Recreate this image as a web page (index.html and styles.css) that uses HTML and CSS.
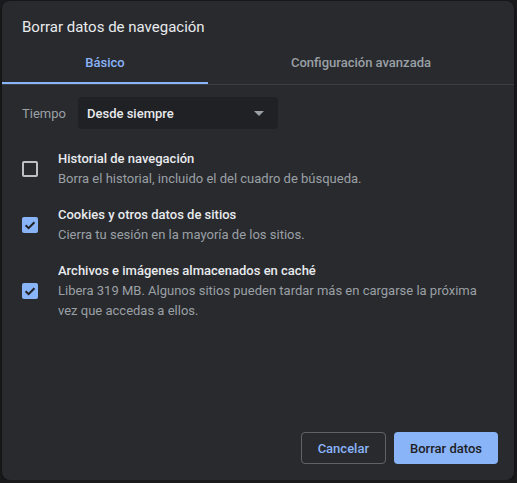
FILE: index.html
```html
<!DOCTYPE html>
<html lang="es">
<head>
    <meta charset="UTF-8">
    <meta name="viewport" content="width=device-width, initial-scale=1.0">
    <title>Borrar datos de navegación</title>
    <link rel="stylesheet" href="styles.css">
</head>
<body>
    <div class="dialog">
        <h1 class="title">Borrar datos de navegación</h1>

        <div class="tabs">
            <div class="tab tab-basic active">Básico</div>
            <div class="tab tab-advanced">Configuración avanzada</div>
        </div>

        <div class="content">
            <div class="time-row">
                <span class="time-label">Tiempo</span>
                <div class="select">
                    <span>Desde siempre</span>
                    <span class="arrow"></span>
                </div>
            </div>

            <div class="item">
                <span class="checkbox"></span>
                <div class="item-text">
                    <div class="item-title">Historial de navegación</div>
                    <div class="item-desc">Borra el historial, incluido el del cuadro de búsqueda.</div>
                </div>
            </div>

            <div class="item">
                <span class="checkbox checked">
                    <svg viewBox="0 0 16 16" width="16" height="16"><path d="M3.6 8.2 L6.6 11.1 L12.4 5.2" fill="none" stroke="#202124" stroke-width="2"/></svg>
                </span>
                <div class="item-text">
                    <div class="item-title">Cookies y otros datos de sitios</div>
                    <div class="item-desc">Cierra tu sesión en la mayoría de los sitios.</div>
                </div>
            </div>

            <div class="item">
                <span class="checkbox checked">
                    <svg viewBox="0 0 16 16" width="16" height="16"><path d="M3.6 8.2 L6.6 11.1 L12.4 5.2" fill="none" stroke="#202124" stroke-width="2"/></svg>
                </span>
                <div class="item-text">
                    <div class="item-title">Archivos e imágenes almacenados en caché</div>
                    <div class="item-desc">Libera 319 MB. Algunos sitios pueden tardar más en cargarse la próxima vez que accedas a ellos.</div>
                </div>
            </div>
        </div>

        <div class="actions">
            <button class="btn btn-cancel">Cancelar</button>
            <button class="btn btn-primary">Borrar datos</button>
        </div>
    </div>
</body>
</html>
```

FILE: styles.css
```css
body {
    margin: 0;
    background-color: #1b1b1d;
    font-family: 'Roboto', 'Liberation Sans', sans-serif;
    font-size: 13px;
    color: #e8eaed;
}
.dialog {
    box-sizing: border-box;
    width: 512px;
    height: 479px;
    margin: 1px 0 0 2px;
    background-color: #292a2d;
    border-radius: 8px;
    display: flex;
    flex-direction: column;
    box-shadow: 0 1px 4px rgba(0, 0, 0, 0.5);
}
.title {
    margin: 0;
    padding: 16px 20px 0 20px;
    font-size: 15px;
    font-weight: 400;
    line-height: 20px;
    color: #e8eaed;
}
.tabs {
    display: flex;
    margin-top: 7px;
    border-bottom: 1px solid #3c4043;
}
.tab {
    box-sizing: border-box;
    height: 40px;
    line-height: 38px;
    text-align: center;
    font-weight: 500;
    color: #9aa0a6;
    border-bottom: 2px solid transparent;
}
.tab-basic {
    width: 206px;
}
.tab-advanced {
    flex: 1;
}
.tab.active {
    color: #8ab4f8;
    border-bottom-color: #8ab4f8;
}
.content {
    flex: 1;
    padding: 12px 20px 0 20px;
}
.time-row {
    display: flex;
    align-items: center;
}
.time-label {
    width: 56px;
    color: #9aa0a6;
}
.select {
    box-sizing: border-box;
    width: 200px;
    height: 32px;
    padding: 0 8px 0 9px;
    background-color: #202124;
    border-radius: 4px;
    display: flex;
    align-items: center;
    justify-content: space-between;
    font-weight: 500;
}
.arrow {
    width: 0;
    height: 0;
    margin-right: 6px;
    border-left: 5px solid transparent;
    border-right: 5px solid transparent;
    border-top: 5px solid #9aa0a6;
}
.item {
    display: flex;
    align-items: center;
    margin-top: 20px;
}
.item + .item {
    margin-top: 16px;
}
.checkbox {
    box-sizing: border-box;
    flex: none;
    width: 16px;
    height: 16px;
    margin-right: 20px;
    border: 2px solid #bdc1c6;
    border-radius: 2px;
    display: flex;
    align-items: center;
    justify-content: center;
}
.checkbox.checked {
    background-color: #8ab4f8;
    border: none;
}
.item-text {
    line-height: 20px;
}
.item-title {
    font-weight: 500;
}
.item-desc {
    color: #9aa0a6;
}
.actions {
    display: flex;
    justify-content: flex-end;
    gap: 8px;
    padding: 0 16px 16px 0;
}
.btn {
    box-sizing: border-box;
    height: 32px;
    padding: 0 16px;
    border-radius: 4px;
    font-family: 'Roboto', 'Liberation Sans', sans-serif;
    font-size: 13px;
    font-weight: 500;
    cursor: pointer;
}
.btn-cancel {
    background-color: transparent;
    color: #8ab4f8;
    border: 1px solid #5f6368;
}
.btn-primary {
    background-color: #8ab4f8;
    color: #202124;
    border: none;
}
```
